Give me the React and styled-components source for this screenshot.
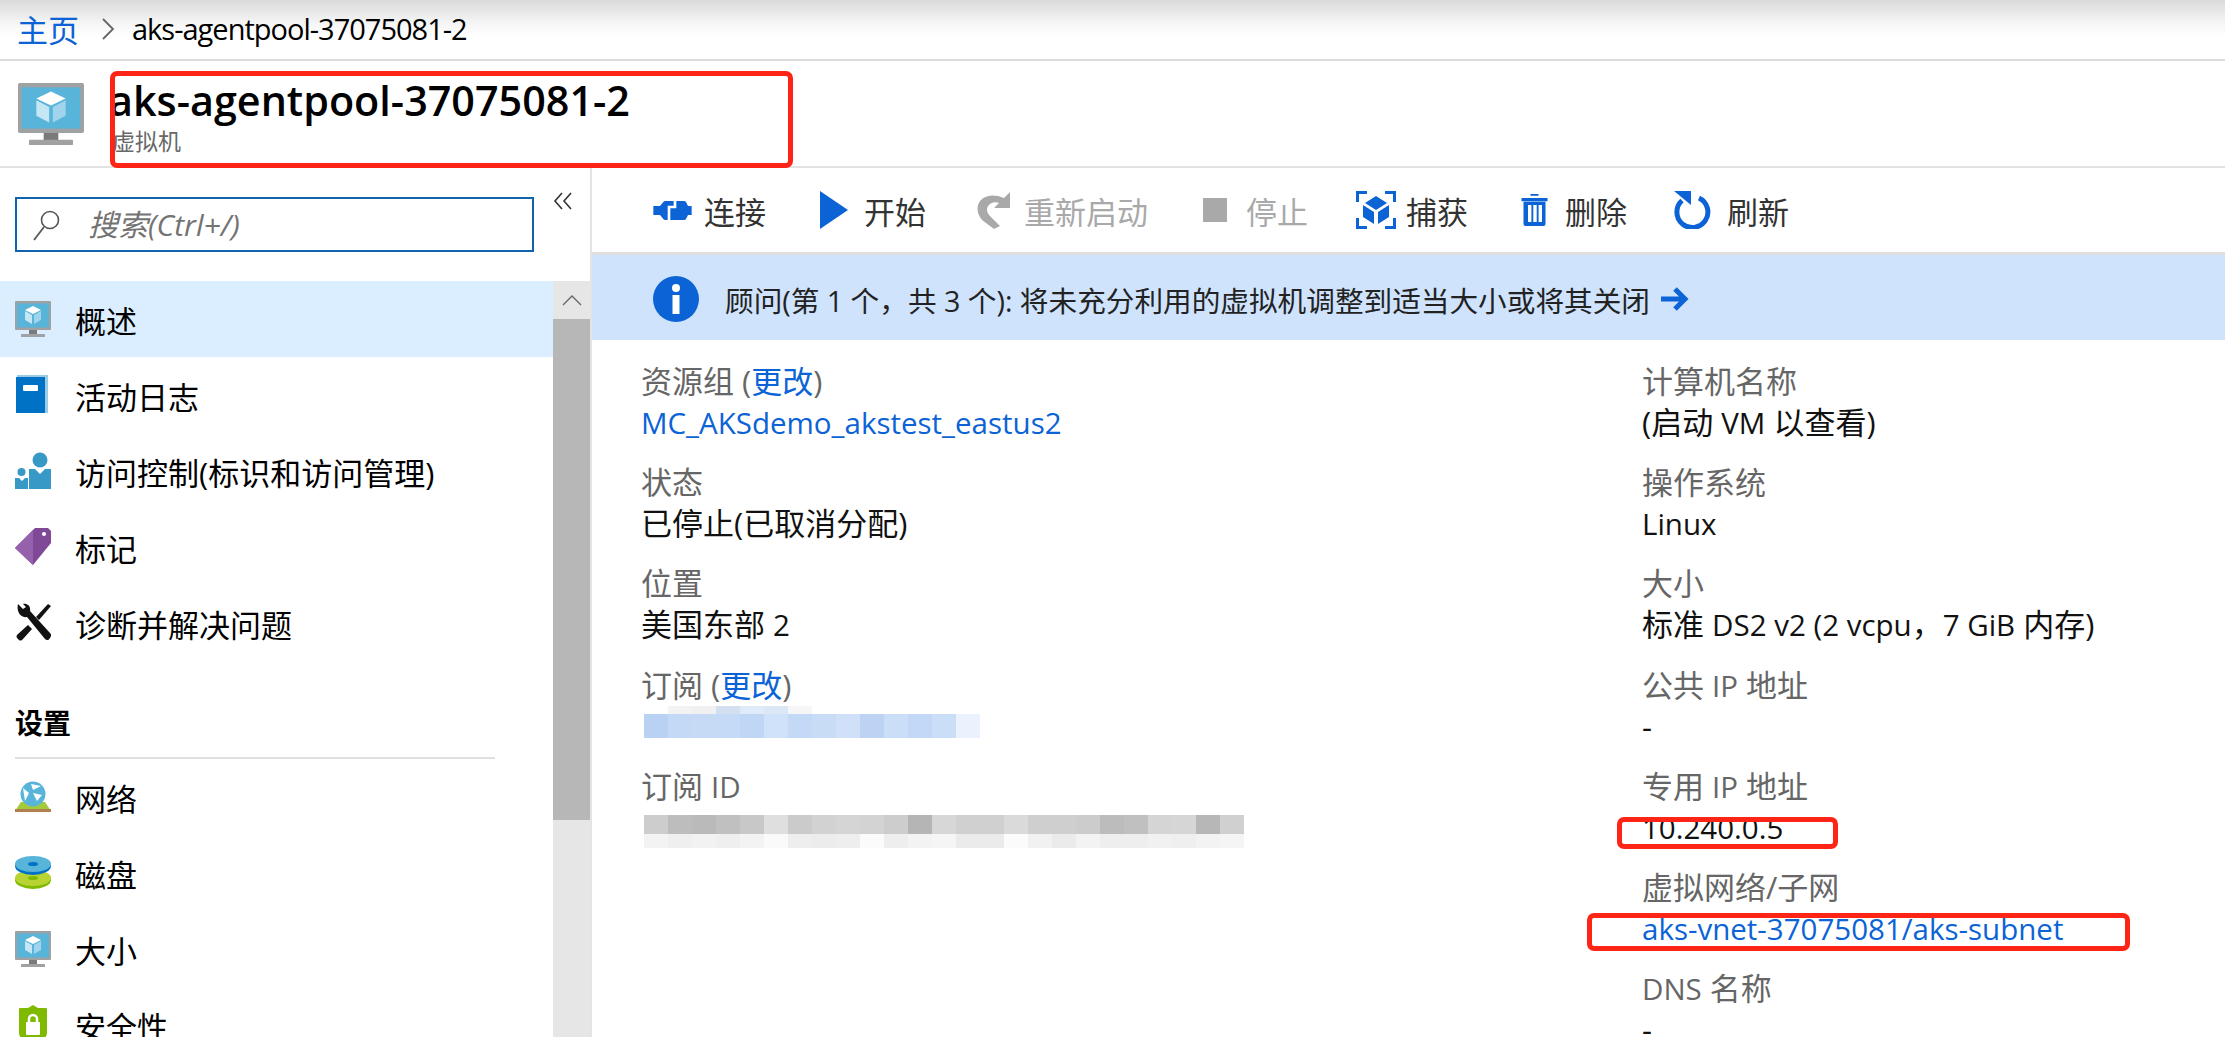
import React from "react";
import styled, { createGlobalStyle } from "styled-components";

const Global = createGlobalStyle`
  html, body { margin: 0; padding: 0; background: #fff; overflow: hidden; }
  #root { width: 2225px; height: 1037px; }
  * { box-sizing: border-box; }
`;
const FONT = `"Open Sans", "Noto Sans CJK SC", sans-serif`;

const Page = styled.div`
  position: relative; width: 2225px; height: 1037px; overflow: hidden;
  display: flex; flex-direction: column; background: #fff; font-family: ${FONT}; color: #000;
`;
const Breadcrumb = styled.nav`
  height: 61px; flex: none; display: flex; align-items: center; padding: 0 0 2px 17px;
  font-size: 29px; border-bottom: 2px solid #dcdcdc;
  background: linear-gradient(#dadada 0, #f4f4f4 22px, #fff 36px);
`;
const CrumbLink = styled.a`color: #0b63d6; font-size: 31px;`;
const CrumbSep = styled.svg`width: 14px; height: 24px; margin: 0 17px 0 22px;`;
const CrumbTitle = styled.span`letter-spacing: -1px;`;
const Header = styled.header`
  height: 107px; flex: none; display: flex; align-items: flex-start; padding: 22px 0 0 18px;
  border-bottom: 2px solid #e2e2e2;
`;
const HeaderText = styled.div`margin: -7px 0 0 25px; display: flex; flex-direction: column;`;
const Title = styled.h1`margin: 0; font-size: 41.300px; font-weight: 600; line-height: 48px;`;
const Sub = styled.div`font-size: 23px; line-height: 30px; color: #686868; margin: 2px 0 0 3px;`;
const Body = styled.div`flex: 1; display: flex; min-height: 0;`;
const Sidebar = styled.aside`
  width: 592px; flex: none; display: flex; flex-direction: column; border-right: 2px solid #e4e4e4; min-height: 0;
`;
const SearchRow = styled.div`
  height: 113px; flex: none; display: flex; align-items: flex-start; padding: 29px 0 0 15px;
`;
const SearchBox = styled.div`
  width: 519px; height: 55px; border: 2.5px solid #0f64ad; display: flex; align-items: center; padding-left: 15px;
`;
const SearchText = styled.span`
  margin: -3px 0 0 28px; font-size: 30px; font-style: italic; color: #737373;
`;
const Collapse = styled.svg`width: 20px; height: 18px; margin: -5px 0 0 19px; flex: none;`;
const SideBody = styled.div`flex: 1; display: flex; min-height: 0;`;
const Menu = styled.div`width: 553px; flex: none; overflow: hidden;`;
const MenuRow = styled.div`
  height: 76px; display: flex; align-items: center; padding-left: 15px; font-size: 31px;
  background: ${p => (p.$active ? "#dbeeff" : "transparent")};
`;
const MenuIcon = styled.svg`width: 36px; height: 40px; flex: none; margin-right: 24px;`;
const SectionHead = styled.div`
  margin: 0 58px 0 15px; height: 98px; border-bottom: 2px solid #e0e0e0; padding-top: 43px;
  font-size: 28px; font-weight: 700; line-height: 38px;
`;
const Scrollbar = styled.div`width: 37px; flex: none; background: #e6e6e6; display: flex; flex-direction: column;`;
const ScrollBtn = styled.div`height: 38px; display: flex; align-items: center; justify-content: center;`;
const ScrollThumb = styled.div`height: 501px; background: #b7b7b7;`;
const Main = styled.main`flex: 1; display: flex; flex-direction: column; min-width: 0;`;
const Toolbar = styled.div`
  height: 87px; flex: none; display: flex; align-items: center; border-bottom: 3px solid #dedede; padding-left: 61px;
`;
const Tool = styled.div`
  display: flex; align-items: center; font-size: 31px; color: ${p => (p.$off ? "#a9a9a9" : "#333")};
  margin-left: ${p => p.$ml}px;
`;
const ToolIcon = styled.svg`flex: none; margin-right: ${p => p.$mr}px;`;
const Banner = styled.div`
  height: 85px; flex: none; background: #cfe3fd; display: flex; align-items: center; padding: 3px 0 0 61px; font-size: 28.650px; color: #222;
`;
const BannerIcon = styled.svg`width: 46px; height: 46px; margin-right: 26px; flex: none;`;
const BannerArrow = styled.svg`width: 30px; height: 26px; margin-left: 9px;`;
const Details = styled.div`
  flex: 1; overflow: hidden; display: grid; grid-template-columns: 1001px 1fr; padding: 21px 0 0 49px;
`;
const Col = styled.div`display: flex; flex-direction: column;`;
const Field = styled.div`height: 101.200px; flex: none; display: flex; flex-direction: column; font-size: 31px; line-height: 41px;`;
const Label = styled.div`color: #666; height: 41px; white-space: nowrap;`;
const Value = styled.div`color: #111; height: 41px; white-space: nowrap;`;
const En = styled.span`font-size: 29.500px;`;
const Link = styled.a`color: #0b63d6;`;
const Mosaic = styled.div`display: flex; flex-direction: column; margin: ${p => p.$m}; width: max-content;`;
const MosaicRow = styled.div`display: flex; height: ${p => p.$h}px;`;
const Cell = styled.span`width: 24px; height: 100%; background: ${p => p.$c};`;
const Red = styled.div`
  position: absolute; border: ${p => p.$b}px solid #ff2516; border-radius: 7px;
  left: ${p => p.$x}px; top: ${p => p.$y}px; width: ${p => p.$w}px; height: ${p => p.$h}px;
`;

const Monitor = () => (
  <>
    <rect x="0" y="0" width="36" height="29" rx="1" fill="#a0a1a2" />
    <rect x="2" y="2.500" width="32" height="24" fill="#59b4d9" />
    <rect x="14" y="29" width="8" height="5" fill="#7a7a7a" />
    <rect x="6" y="33" width="24" height="3" rx="0.500" fill="#a0a1a2" />
    <path d="M18 5l8 4-8 4-8-4z" fill="#fff" />
    <path d="M10 10l7 4v9l-7-4z" fill="#c4e6f5" />
    <path d="M26 10l-7 4v9l7-4z" fill="#9fd4ec" />
  </>
);
const ICONS = {
  vm: <g transform="translate(0 2)"><Monitor /></g>,
  log: (
    <>
      <path d="M2 0h31v38H2z" fill="#9ccbe8" />
      <path d="M1 2h29v36H1z" fill="#0072c6" />
      <rect x="8" y="10" width="15" height="6" rx="1" fill="#fff" />
    </>
  ),
  iam: (
    <>
      <circle cx="25" cy="9" r="7.500" fill="#3999c6" />
      <path d="M14 18h6l5 5 5-5h6v20H14z" fill="#3999c6" />
      <circle cx="6.500" cy="21" r="4" fill="#3999c6" />
      <path d="M0 27h4l3 3 3-3h3v11H0z" fill="#3999c6" />
    </>
  ),
  tag: (
    <>
      <path d="M0 21L20 1h13l3 3v12L18 38z" fill="#804998" />
      <path d="M0 21L18 3v35z" fill="#9560ac" />
      <circle cx="29" cy="7" r="2" fill="#fff" />
    </>
  ),
  tools: (
    <path d="M3 1l5 5 3-2-3-3c4-1 8 2 7 7l20 22c2 2 1 3 0 5s-3 3-5 1L12 14C7 15 1 10 3 1zM36 3L24 17l-3-3L33 1zM13 22l4 4-9 10c-2 2-3 2-5 0s-2-3 0-5z" fill="#111" />
  ),
  net: (
    <>
      <path d="M6 25h24l6 9H0z" fill="#a4c93b" />
      <rect x="0" y="32" width="36" height="3" fill="#b47f4f" />
      <circle cx="18" cy="17" r="12.500" fill="#59b4d9" />
      <path d="M8 11l6 5-4 8zM16 7l10 2-8 4zM18 16l9 2-5 6z" fill="#fff" />
    </>
  ),
  disk: (
    <>
      <ellipse cx="18" cy="27" rx="18" ry="9" fill="#7fba00" />
      <ellipse cx="18" cy="25" rx="18" ry="8" fill="#b8d432" />
      <ellipse cx="18" cy="25" rx="5" ry="2" fill="#7fba00" />
      <ellipse cx="18" cy="13" rx="18" ry="9" fill="#0072c6" />
      <ellipse cx="18" cy="11" rx="18" ry="8" fill="#59b4d9" />
      <ellipse cx="18" cy="11" rx="5" ry="2" fill="#0072c6" />
    </>
  ),
  lock: (
    <>
      <path d="M18 0l5 3h8a1 1 0 011 1v24c0 6-8 10-14 12C12 38 4 34 4 28V4a1 1 0 011-1h8z" fill="#7fba00" />
      <rect x="11" y="17" width="14" height="13" rx="1" fill="#fff" />
      <path d="M14 18v-4a4 4 0 018 0v4" fill="none" stroke="#fff" strokeWidth="2.500" />
    </>
  ),
};

const MENU_A = [["vm", "概述", true], ["log", "活动日志"], ["iam", "访问控制(标识和访问管理)"], ["tag", "标记"], ["tools", "诊断并解决问题"]];
const MENU_B = [["net", "网络"], ["disk", "磁盘"], ["vm", "大小"], ["lock", "安全性"]];
const BLUE_TOP = ["#ffffff","#f3f3f3","#f0f0f0","#d2dfee","#e0ebf9","#dce7f6","#f6f6f6"];
const BLUE = ["#b9d2f3","#c4d9f6","#c6daf6","#c5daf6","#bfd6f5","#d0e2f9","#c3d9f6","#c8dcf6","#cfe0f8","#bcd3f4","#cbdef8","#c3d8f6","#cbdef8","#eaf2fd"];
const GRAY = ["#cdcdcd","#bdbdbd","#bababa","#c0c0c0","#c8c8c8","#dfdfdf","#cbcbcb","#d2d2d2","#d5d5d5","#d3d3d3","#cdcdcd","#b5b5b5","#d7d7d7","#d0d0d0","#d0d0d0","#dadada","#cfcfcf","#cfcfcf","#cccccc","#bcbcbc","#c0c0c0","#d5d5d5","#d6d6d6","#b7b7b7","#d0d0d0"];
const GRAY_LOW = ["#f3f3f3","#efefef","#f2f2f2","#efefef","#f3f3f3","#fafafa","#eeeeee","#ececec","#eeeeee","#fbfbfb","#eeeeee","#f3f3f3","#f5f5f5","#ebebeb","#ebebeb","#fbfbfb","#f1f1f1","#ebebeb","#f3f3f3","#eeeeee","#eeeeee","#f1f1f1","#efefef","#f3f3f3","#f5f5f5"];

const Cells = ({ colors }) => colors.map((c, i) => <Cell key={i} $c={c} />);

const Row = ({ icon, text, active }) => (
  <MenuRow $active={active}>
    <MenuIcon viewBox="0 0 36 40">{ICONS[icon]}</MenuIcon>
    {text}
  </MenuRow>
);

export default function App() {
  return (
    <Page>
      <Global />
      <Breadcrumb>
        <CrumbLink>主页</CrumbLink>
        <CrumbSep viewBox="0 0 14 24"><path d="M2 2l10 10L2 22" fill="none" stroke="#666" strokeWidth="1.800" /></CrumbSep>
        <CrumbTitle>aks-agentpool-37075081-2</CrumbTitle>
      </Breadcrumb>
      <Header>
        <svg width="66" height="62" viewBox="0 0 36 36" preserveAspectRatio="none"><Monitor /></svg>
        <HeaderText>
          <Title>aks-agentpool-37075081-2</Title>
          <Sub>虚拟机</Sub>
        </HeaderText>
      </Header>
      <Body>
        <Sidebar>
          <SearchRow>
            <SearchBox>
              <svg width="28" height="34" viewBox="0 0 28 34"><circle cx="18" cy="12" r="8.500" fill="none" stroke="#555" strokeWidth="1.600" /><path d="M12 19L2 32" stroke="#555" strokeWidth="1.800" /></svg>
              <SearchText>搜索(Ctrl+/)</SearchText>
            </SearchBox>
            <Collapse viewBox="0 0 20 18"><path d="M9 1L2 9l7 8M18 1l-7 8 7 8" fill="none" stroke="#333" strokeWidth="1.600" /></Collapse>
          </SearchRow>
          <SideBody>
            <Menu>
              {MENU_A.map(([i, t, a]) => <Row key={t} icon={i} text={t} active={a} />)}
              <SectionHead>设置</SectionHead>
              {MENU_B.map(([i, t]) => <Row key={t} icon={i} text={t} />)}
            </Menu>
            <Scrollbar>
              <ScrollBtn><svg width="20" height="12" viewBox="0 0 20 12"><path d="M1 11l9-9 9 9" fill="none" stroke="#666" strokeWidth="1.400" /></svg></ScrollBtn>
              <ScrollThumb />
            </Scrollbar>
          </SideBody>
        </Sidebar>
        <Main>
          <Toolbar>
            <Tool>
              <ToolIcon $mr={12} width="39" height="19" viewBox="0 0 115 57">
                <path d="M0 15H20L30 3Q32 0 36 0H92Q96 0 98 3L104 15H115V42H104L98 54Q96 57 92 57H36Q32 57 30 54L20 42H0z" fill="#0b63d6" />
                <path d="M65 0V18H47V57" fill="none" stroke="#fff" strokeWidth="8" />
              </ToolIcon>连接
            </Tool>
            <Tool $ml={54}><ToolIcon $mr={16} width="28" height="38" viewBox="0 0 28 38"><path d="M0 0l28 19L0 38z" fill="#0b63d6" /></ToolIcon>开始</Tool>
            <Tool $ml={51} $off>
              <ToolIcon $mr={13} width="34" height="37" viewBox="0 0 34 37">
                <path d="M33 0v16H17l5-5c-3-1-6-1-9 1-4 3-4 8 0 12l10 10-6 3L5 28C-1 21-1 12 5 7c5-4 13-5 22-1z" fill="#a9a9a9" />
              </ToolIcon>重新启动
            </Tool>
            <Tool $ml={55} $off><ToolIcon $mr={19} width="24" height="24" viewBox="0 0 24 24"><rect width="24" height="24" fill="#a9a9a9" /></ToolIcon>停止</Tool>
            <Tool $ml={48}>
              <ToolIcon $mr={10} width="40" height="38" viewBox="0 0 40 38">
                <path d="M1.500 11V1.500H11M29 1.500h9.500V11M38.500 27v9.500H29M11 36.500H1.500V27" fill="none" stroke="#0b63d6" strokeWidth="3" />
                <path d="M20 5l11 7-11 7-11-7z" fill="#0b63d6" />
                <path d="M7 14l11 7v12L7 26zM33 14L22 21v12l11-7z" fill="#0b63d6" />
              </ToolIcon>捕获
            </Tool>
            <Tool $ml={53}>
              <ToolIcon $mr={17} width="27" height="33" viewBox="0 0 27 33">
                <path d="M9.500 0h8v1.700h-8zM0.500 4h26v3.300H0.500zM2.500 7.700h22V30a2 2 0 0 1-2 2h-18a2 2 0 0 1-2-2z" fill="#0b63d6" />
                <path d="M7 11h3.400v17H7zM12.300 11h3.400v17h-3.400zM17.600 11H21v17h-3.400z" fill="#fff" />
              </ToolIcon>删除
            </Tool>
            <Tool $ml={46}>
              <ToolIcon $mr={16} width="38" height="38" viewBox="0 0 38 38">
                <path d="M9 9.500A15.500 15.500 0 1 0 26 7" fill="none" stroke="#0b63d6" strokeWidth="5" />
                <path d="M1 0h17v14z" fill="#0b63d6" />
              </ToolIcon>刷新
            </Tool>
          </Toolbar>
          <Banner>
            <BannerIcon viewBox="0 0 46 46"><circle cx="23" cy="23" r="23" fill="#0b63d6" /><circle cx="23" cy="12" r="4" fill="#fff" /><rect x="19.500" y="19" width="7" height="19" fill="#fff" /></BannerIcon>
            顾问(第 1 个，共 3 个): 将未充分利用的虚拟机调整到适当大小或将其关闭
            <BannerArrow viewBox="0 0 30 26"><path d="M2 13h24M16 3l10 10-10 10" fill="none" stroke="#0b63d6" strokeWidth="5" /></BannerArrow>
          </Banner>
          <Details>
            <Col>
              <Field><Label>资源组 (<Link>更改</Link>)</Label><Value><Link><En>MC_AKSdemo_akstest_eastus2</En></Link></Value></Field>
              <Field><Label>状态</Label><Value>已停止(已取消分配)</Value></Field>
              <Field><Label>位置</Label><Value>美国东部 <En>2</En></Value></Field>
              <Field>
                <Label>订阅 (<Link>更改</Link>)</Label>
                <Mosaic $m="0 0 0 3px">
                  <MosaicRow $h={8}><Cells colors={BLUE_TOP} /></MosaicRow>
                  <MosaicRow $h={24}><Cells colors={BLUE} /></MosaicRow>
                </Mosaic>
              </Field>
              <Field>
                <Label>订阅 <En>ID</En></Label>
                <Mosaic $m="8px 0 0 3px">
                  <MosaicRow $h={19}><Cells colors={GRAY} /></MosaicRow>
                  <MosaicRow $h={14}><Cells colors={GRAY_LOW} /></MosaicRow>
                </Mosaic>
              </Field>
            </Col>
            <Col>
              <Field><Label>计算机名称</Label><Value>(启动 <En>VM</En> 以查看)</Value></Field>
              <Field><Label>操作系统</Label><Value><En>Linux</En></Value></Field>
              <Field><Label>大小</Label><Value>标准 <En>DS2 v2 (2 vcpu</En>，<En>7 GiB</En> 内存)</Value></Field>
              <Field><Label>公共 <En>IP</En> 地址</Label><Value>-</Value></Field>
              <Field><Label>专用 <En>IP</En> 地址</Label><Value><En>10.240.0.5</En></Value></Field>
              <Field><Label>虚拟网络/子网</Label><Value><Link><En>aks-vnet-37075081/aks-subnet</En></Link></Value></Field>
              <Field><Label><En>DNS</En> 名称</Label><Value>-</Value></Field>
            </Col>
          </Details>
        </Main>
      </Body>
      <Red $b={5} $x={110} $y={71} $w={683} $h={97} />
      <Red $b={5} $x={1617} $y={817} $w={221} $h={32} />
      <Red $b={5} $x={1587} $y={913} $w={543} $h={38} />
    </Page>
  );
}
